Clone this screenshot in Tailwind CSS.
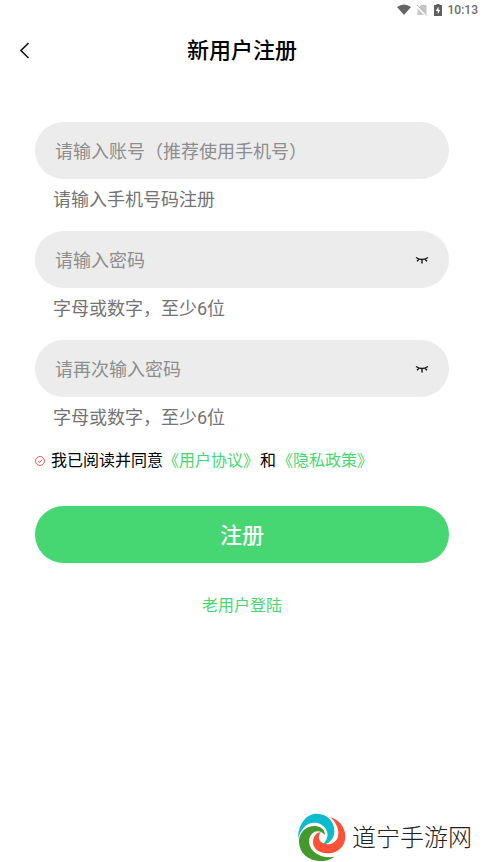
<!DOCTYPE html>
<html lang="zh-CN">
<head>
<meta charset="utf-8">
<meta name="viewport" content="width=device-width, initial-scale=1">
<title>新用户注册</title>
<script src="https://cdn.jsdelivr.net/npm/@tailwindcss/browser@4"></script>
</head>
<body class="flex min-h-screen flex-col bg-white font-['Roboto','Noto_Sans_CJK_SC',sans-serif] text-black">
  <div class="flex h-5 items-center justify-end pr-1.5 text-xs font-medium text-[#6b6b6b]">
    <svg class="mr-1 h-3 w-4" viewBox="0 0 16 12" aria-hidden="true"><path d="M1 3Q8-2 15 3L8 11Z" fill="#666"/></svg>
    <svg class="mr-1.5 h-3 w-3" viewBox="0 0 12 12" aria-hidden="true"><path d="M5 1h5.500v9.500L3 3ZM1.500 4.500L8 11H1.500Z" fill="#c4c4c4"/><path d="M1 1l10 10.500" stroke="#b4b4b4"/></svg>
    <svg class="mr-1.5 h-3 w-2" viewBox="0 0 8 12" aria-hidden="true"><path d="M2.500 0h3v1H8v11H0V1h2.500Z" fill="#5f5f5f"/><path d="M4.500 2.500L1.800 7h1.900v3.200L6.300 5.700H4.500Z" fill="#fff"/></svg>
    <span>10:13</span>
  </div>

  <header class="grid h-[61px] grid-cols-[48px_1fr_48px] items-center">
    <button type="button" aria-label="返回" class="flex h-12 items-center pl-4">
      <svg class="h-5 w-4" viewBox="0 0 16 20" fill="none" stroke="#111" stroke-width="1.6" aria-hidden="true"><path d="M12.500 2L5 9.500l7.500 7.500"/></svg>
    </button>
    <h1 class="text-center text-[22px] font-medium leading-8">新用户注册</h1>
  </header>

  <main class="px-[35px] pt-[41px]">
    <form class="flex flex-col">
      <div class="flex flex-col gap-[19px]">
        <div>
          <input id="account" type="text" aria-label="账号" aria-describedby="account-tip" placeholder="请输入账号（推荐使用手机号）" class="block h-[57px] w-full rounded-full bg-[#ececec] px-5 pt-0.5 text-lg outline-none placeholder:text-[#8d8d8d]">
          <p id="account-tip" class="mt-[9px] pl-[18px] text-lg leading-6 text-[#737373]">请输入手机号码注册</p>
        </div>
        <div>
          <div class="flex h-[57px] items-center rounded-full bg-[#ececec] px-5">
            <input id="password" type="password" aria-label="密码" aria-describedby="password-tip" placeholder="请输入密码" class="min-w-0 flex-1 bg-transparent pt-0.5 text-lg outline-none placeholder:text-[#8d8d8d]">
            <button type="button" aria-label="显示密码"><svg class="h-3 w-3.5" viewBox="0 0 14 12" fill="none" stroke="#111" stroke-width="1.400" aria-hidden="true"><path d="M1 3.500Q7 7.500 13 3.500M4 5.200L2 7.200M7 5.500V9.500M10 5.200L12 7.200"/></svg></button>
          </div>
          <p id="password-tip" class="mt-[9px] pl-[18px] text-lg leading-6 text-[#737373]">字母或数字，至少6位</p>
        </div>
        <div>
          <div class="flex h-[57px] items-center rounded-full bg-[#ececec] px-5">
            <input id="confirm" type="password" aria-label="确认密码" aria-describedby="confirm-tip" placeholder="请再次输入密码" class="min-w-0 flex-1 bg-transparent pt-0.5 text-lg outline-none placeholder:text-[#8d8d8d]">
            <button type="button" aria-label="显示密码"><svg class="h-3 w-3.5" viewBox="0 0 14 12" fill="none" stroke="#111" stroke-width="1.400" aria-hidden="true"><path d="M1 3.500Q7 7.500 13 3.500M4 5.200L2 7.200M7 5.500V9.500M10 5.200L12 7.200"/></svg></button>
          </div>
          <p id="confirm-tip" class="mt-[9px] pl-[18px] text-lg leading-6 text-[#737373]">字母或数字，至少6位</p>
        </div>
      </div>

      <div class="mt-5 flex items-center text-base leading-[22px]">
        <span class="relative mr-1.5 size-2.5">
          <input id="agree" type="checkbox" checked class="peer block size-2.5 appearance-none rounded-full">
          <svg class="pointer-events-none absolute inset-0 size-2.5 opacity-0 peer-checked:opacity-100" viewBox="0 0 10 10" fill="none" stroke="#ee4b40" stroke-width=".9" aria-hidden="true"><circle cx="5" cy="5" r="4.500"/><path d="M2.700 5l1.700 1.700 3-3"/></svg>
        </span>
        <label for="agree">我已阅读并同意</label>
        <a href="#" class="text-[#46d772]">《用户协议》</a><span class="mx-px">和</span><a href="#" class="text-[#46d772]">《隐私政策》</a>
      </div>

      <button type="submit" class="mt-[34px] h-[57px] rounded-full bg-[#46d772] pt-px text-[22px] font-medium text-white">注册</button>
      <a href="#" class="mt-[31px] self-center text-base leading-6 text-[#46d772]">老用户登陆</a>
    </form>
  </main>

  <footer class="mt-auto flex items-center justify-end gap-1.5 pr-3">
    <svg class="size-[50px]" viewBox="20 20 150 150" aria-hidden="true">
      <path d="M26 99C27 54 52 25 82 25C116 26 136 50 135 80C134 101 120 115 99 119C113 106 119 89 111 74C103 58 86 50 67 53C47 57 34 75 26 99Z" fill="#0bbccc"/>
      <path d="M122 35C151 43 168 68 168 94C168 124 144 144 116 144C89 144 71 130 71 110C71 94 80 82 94 80C85 92 87 107 102 114C119 121 138 113 145 97C152 78 143 53 122 35Z" fill="#ff5138"/>
      <path d="M136 154C122 164 108 167 91 167C57 166 31 145 29 111C28 82 50 62 75 62C95 62 107 73 107 89C97 76 79 73 68 85C54 99 57 124 74 139C91 154 113 158 136 154Z" fill="#43992c"/>
    </svg>
    <span class="pt-0.5 text-2xl font-light text-[#222]">道宁手游网</span>
  </footer>
</body>
</html>
